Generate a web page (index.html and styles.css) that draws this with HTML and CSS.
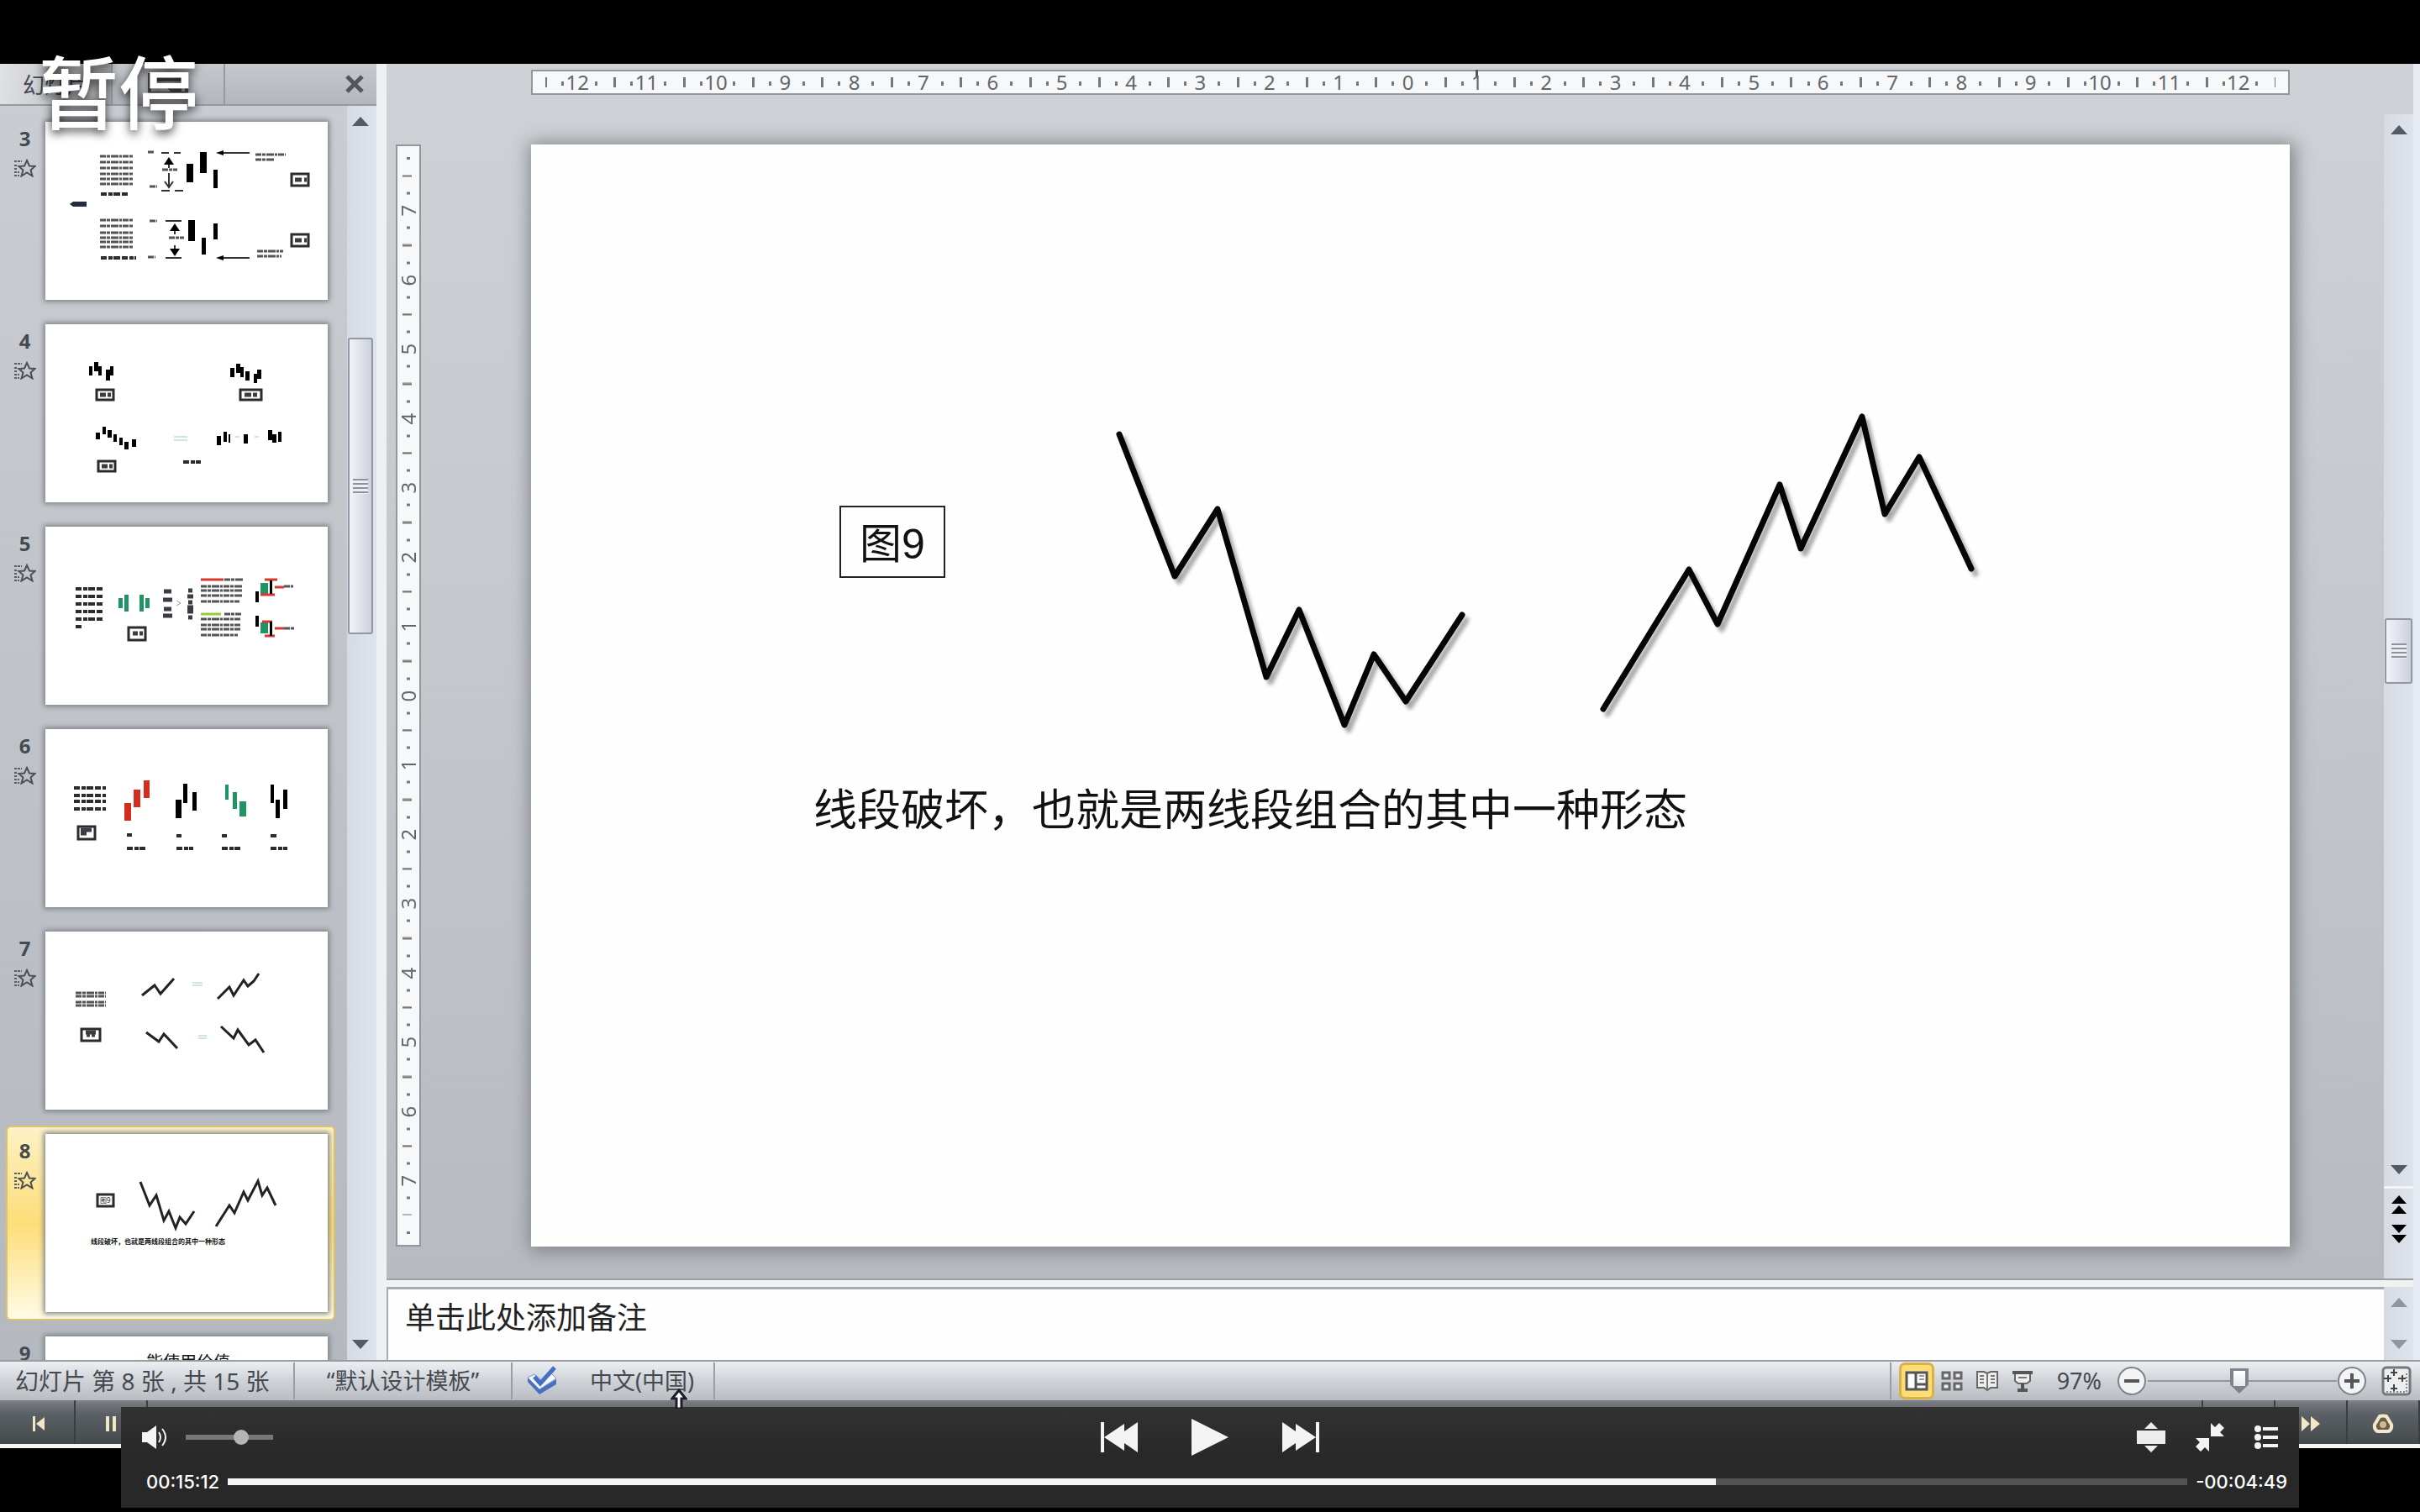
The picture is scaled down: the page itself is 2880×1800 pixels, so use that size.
FILE: index.html
```html
<!DOCTYPE html>
<html lang="zh-CN">
<head>
<meta charset="utf-8">
<title>视频播放</title>
<link rel="stylesheet" href="styles.css">
</head>
<body>
<main class="screen">
  <svg class="defs" aria-hidden="true">
    <symbol id="anim" viewBox="0 0 26 22">
      <path d="M15 2l3 6.500 6.500.500-5 4.500 2 7-6.500-4-6.500 4 2-7-5-4.500 6.500-.5z" fill="none" stroke="#4c5055" stroke-width="2"/>
      <path d="M0 3h9M0 8h4M0 12h3M0 16h6M0 20h6" stroke="#5b5f64" stroke-width="2" stroke-dasharray="3 1"/>
    </symbol>
  </svg>

  <section class="video">
    <div class="workspace">
      <aside class="outline">
        <header class="tabs">
          <button class="tab tab-on">幻灯片</button>
          <button class="tab" aria-label="大纲"><svg width="48" height="26" viewBox="0 0 48 26"><path d="M2 2h44v22H2zM8 8h32M8 14h14l6 6h12" fill="none" stroke="#4d5155" stroke-width="4"/></svg></button>
          <button class="close" aria-label="关闭"><svg width="24" height="24" viewBox="0 0 24 24"><path d="M3 3l18 18M21 3L3 21" stroke="#53575c" stroke-width="5"/></svg></button>
        </header>
        <div class="outline-body">
          <ol class="thumbs">
            <li class="item">
              <div class="meta"><b>3</b><svg width="26" height="22"><use href="#anim"/></svg></div>
              <button class="thumb" aria-label="幻灯片 3"><svg viewBox="0 0 336 212">
                <g class="scribble">
                  <path d="M65 41h39M65 48h39M65 55h39M65 62h39M65 68h39M65 74h39M65 117h39M65 124h39M65 132h39M65 138h39M65 143h39M65 149h39"/>
                  <path class="heavy" d="M66 86h32M66 162h42"/>
                  <path d="M250 39h36M250 45h22M252 154h31M252 160h29M122 36h8M124 77h9M124 118h9M122 161h9M139 57h18M147 138h18"/>
                </g>
                <path d="M29 98l4-3h16v6H33z" fill="#222c3a"/>
                <path class="rule" d="M138 37h9M153 37h8M138 82h10M154 82h10M143 118h19M143 162h19M208 37h35M208 162h35M147 50v5M147 61v16M142 71l5 7 5-7M154 128v6M154 147v8"/>
                <path d="M147 42l6 9h-12zM154 121l6 9h-12zM154 160l6-9h-12zM203 37l9-3v6zM203 162l9-3v6z"/>
                <path d="M168 50h8v22h-8zM184 36h8v25h-8zM200 57h5v22h-5zM170 117h8v25h-8zM186 138h5v20h-5zM200 121h5v19h-5z"/>
                <path class="box" d="M293 62h20v14h-20zM293 134h20v14h-20z"/>
                <path class="fill" d="M297 69h8M308 69h3M297 141h8M308 141h3"/>
              </svg></button>
            </li>
            <li class="item">
              <div class="meta"><b>4</b><svg width="26" height="22"><use href="#anim"/></svg></div>
              <button class="thumb" aria-label="幻灯片 4"><svg viewBox="0 0 336 212">
                <path d="M52 50h4v11h-4zM58 45h5v11h-5zM63 50h4v11h-4zM72 54h5v13h-5zM77 50h4v11h-4zM220 52h5v11h-5zM227 47h5v11h-5zM232 51h4v12h-4zM238 56h5v11h-5zM248 59h4v11h-4zM252 54h5v11h-5z"/>
                <path d="M60 129h5v8h-5zM68 122h4v9h-4zM74 126h5v9h-5zM81 131h4v9h-4zM88 135h4v9h-4zM94 140h5v9h-5zM103 137h5v9h-5zM204 133h5v11h-5zM212 128h4v12h-4zM218 131h2v10h-2zM236 131h5v11h-5zM265 126h5v12h-5zM270 131h5v10h-5zM277 128h4v12h-4z"/>
                <path class="box" d="M61 78h20v12h-20zM232 78h25v12h-25zM63 163h20v12h-20z"/>
                <path class="fill" d="M65 84h7M74 84h4M237 84h8M247 84h5M67 169h7M76 169h4"/>
                <path class="scribble heavy" d="M164 164h21"/>
                <path class="pale" d="M153 134h16M153 138h16M226 134h5M249 134h5"/>
              </svg></button>
            </li>
            <li class="item">
              <div class="meta"><b>5</b><svg width="26" height="22"><use href="#anim"/></svg></div>
              <button class="thumb" aria-label="幻灯片 5"><svg viewBox="0 0 336 212">
                <path class="scribble heavy" d="M36 74h34M36 83h34M36 92h34M36 101h34M36 110h34M36 119h7"/>
                <path class="fill" d="M141 77h9M140 87h11M141 98h9M140 106h11M170 76h5M169 83h7M170 90h5M169 96h7M169 101h7M170 108h5"/>
                <path d="M156 88l5 3-5 3" fill="none" stroke="#999"/>
                <path class="green" d="M87 85h5v12h-5zM94 81h5v20h-5zM112 81h5v20h-5zM119 85h5v12h-5zM256 67h9v14h-9zM256 114h9v13h-9z"/>
                <path class="box" d="M99 120h20v15h-20z"/>
                <path class="fill" d="M104 127h6M112 127h4"/>
                <path class="scribble" d="M213 63h22M185 71h50M185 76h50M185 82h50M185 89h46M213 104h20M185 110h47M185 117h47M185 122h47M185 129h44M284 71h11M284 121h13"/>
                <path d="M185 63h27M261 63h15M256 81h17M273 72h11M258 113h12M261 130h12M273 121h11" stroke="#d8382a" stroke-width="3"/>
                <path d="M185 104h24" stroke="#9acb3b" stroke-width="3"/>
                <path d="M250 77h4v13h-4zM267 64h3v16h-3zM250 106h4v13h-4zM267 113h3v17h-3z"/>
              </svg></button>
            </li>
            <li class="item">
              <div class="meta"><b>6</b><svg width="26" height="22"><use href="#anim"/></svg></div>
              <button class="thumb" aria-label="幻灯片 6"><svg viewBox="0 0 336 212">
                <path class="scribble heavy" d="M34 70h38M34 79h38M34 86h38M34 95h38M97 126h6M156 127h6M210 127h6M268 127h7M97 142h22M156 142h20M210 142h22M268 142h20"/>
                <path class="box" d="M39 116h20v15h-20z"/>
                <path class="fill" d="M42 120h13M42 124h7"/>
                <path class="red" d="M94 88h8v21h-8zM105 72h8v21h-8zM117 61h7v21h-7z"/>
                <path d="M155 84h7v22h-7zM164 65h5v23h-5zM175 75h5v22h-5zM268 66h4v22h-4zM274 84h5v22h-5zM283 72h5v23h-5z"/>
                <path class="green" d="M214 66h4v18h-4zM223 75h5v20h-5zM231 86h8v18h-8z"/>
              </svg></button>
            </li>
            <li class="item">
              <div class="meta"><b>7</b><svg width="26" height="22"><use href="#anim"/></svg></div>
              <button class="thumb" aria-label="幻灯片 7"><svg viewBox="0 0 336 212">
                <path class="scribble" d="M36 73h36M36 77h36M36 84h36M36 88h36"/>
                <path class="box" d="M43 116h22v14h-22z"/>
                <path class="fill" d="M48 120h12M49 123h4M55 123h4"/>
                <path class="zig" d="M115 76L130 64 137 74 153 56M205 80L219 66 224 76 236 58 241 65 248 59 254 50M120 120L135 131 141 122 157 139M209 113L224 127 229 117 242 135 250 129 260 144"/>
                <path class="pale" d="M175 61h12M175 64h12M182 124h10M182 127h10"/>
              </svg></button>
            </li>
            <li class="item item-on">
              <div class="meta"><b>8</b><svg width="26" height="22"><use href="#anim"/></svg></div>
              <button class="thumb" aria-label="幻灯片 8"><svg viewBox="0 0 336 212">
                <path class="box" d="M62 72h19v14h-19z"/>
                <text class="mini" x="65" y="82">图9</text>
                <path class="zig" d="M113 57L124 85 132 73 141 103 147 92 155 112 160 99 167 107 177 92M203 110L219 85 225 94 236 69 241 79 253 56 258 73 264 64 274 85"/>
                <text class="mini mini-bold" x="54" y="131">线段破坏，也就是两线段组合的其中一种形态</text>
              </svg></button>
            </li>
            <li class="item">
              <div class="meta"><b>9</b><svg width="26" height="22"><use href="#anim"/></svg></div>
              <button class="thumb" aria-label="幻灯片 9"><svg viewBox="0 0 336 212"><text class="mini-title" x="120" y="38">能使用价值</text></svg></button>
            </li>
          </ol>
          <div class="scroll scroll-outline">
            <button class="arrow" aria-label="向上"><svg width="20" height="11" viewBox="0 0 20 11"><path d="M0 11L10 0l10 11z"/></svg></button>
            <div class="track track-outline"><div class="grip"></div></div>
            <button class="arrow" aria-label="向下"><svg width="20" height="11" viewBox="0 0 20 11"><path d="M0 0h20L10 11z"/></svg></button>
          </div>
        </div>
      </aside>

      <div class="editor">
        <div class="stage-row">
          <div class="stage">
            <div class="ruler ruler-h">
              <span>12</span><span>11</span><span>10</span><span>9</span><span>8</span><span>7</span><span>6</span><span>5</span><span>4</span><span>3</span><span>2</span><span>1</span><span>0</span><span class="at">1</span><span>2</span><span>3</span><span>4</span><span>5</span><span>6</span><span>7</span><span>8</span><span>9</span><span>10</span><span>11</span><span>12</span>
            </div>
            <div class="ruler ruler-v">
              <span>7</span><span>6</span><span>5</span><span>4</span><span>3</span><span>2</span><span>1</span><span>0</span><span>1</span><span>2</span><span>3</span><span>4</span><span>5</span><span>6</span><span>7</span>
            </div>
            <article class="slide">
              <svg viewBox="0 0 2093 1312">
                <path d="M368 431h124v84H368z" fill="none" stroke="#222" stroke-width="2"/>
                <text class="figure" x="391" y="493">图9</text>
                <g class="lines">
                  <path d="M700 345L766 514 817 434 875 634 914 554 968 691 1003 607 1041 663 1108 560"/>
                  <path d="M1276 672L1378 506 1412 571 1486 405 1511 481 1584 324 1611 440 1652 372 1714 505"/>
                </g>
                <text class="caption" x="336" y="811">线段破坏，也就是两线段组合的其中一种形态</text>
              </svg>
            </article>
          </div>
          <div class="scroll scroll-main">
            <button class="arrow" aria-label="向上"><svg width="20" height="11" viewBox="0 0 20 11"><path d="M0 11L10 0l10 11z"/></svg></button>
            <div class="track track-main"><div class="grip"></div></div>
            <button class="arrow" aria-label="向下"><svg width="20" height="11" viewBox="0 0 20 11"><path d="M0 0h20L10 11z"/></svg></button>
            <div class="pager">
              <button class="arrow" aria-label="上一张"><svg width="18" height="22" viewBox="0 0 18 22"><path d="M9 0l9 10H0zM9 12l9 10H0z"/></svg></button>
              <button class="arrow" aria-label="下一张"><svg width="18" height="22" viewBox="0 0 18 22"><path d="M0 0h18L9 10zM0 12h18L9 22z"/></svg></button>
            </div>
          </div>
        </div>
        <div class="notes-row">
          <textarea class="notes" aria-label="备注">单击此处添加备注</textarea>
          <div class="scroll scroll-notes">
            <button class="arrow" aria-label="向上"><svg width="20" height="11" viewBox="0 0 20 11"><path d="M0 11L10 0l10 11z"/></svg></button>
            <button class="arrow" aria-label="向下"><svg width="20" height="11" viewBox="0 0 20 11"><path d="M0 0h20L10 11z"/></svg></button>
          </div>
        </div>
      </div>
    </div>

    <footer class="status">
      <span class="cell cell-count">幻灯片 第 8 张 , 共 15 张</span>
      <span class="cell cell-theme">“默认设计模板”</span>
      <span class="cell cell-lang"><svg width="40" height="38" viewBox="0 0 40 38"><path d="M2 20l14 15 20-12v-6L16 29 2 15z" fill="#4a6fc0"/><path d="M2 15l8-4 8 7 12-8 6 6-20 13z" fill="#f4f6fa" stroke="#7b93cf"/><path d="M10 14l7 8L34 3" fill="none" stroke="#4470c4" stroke-width="5"/></svg>中文(中国)</span>
      <div class="views">
        <button class="view view-on" aria-label="普通视图"><svg width="28" height="24" viewBox="0 0 28 24"><path d="M2 2h24v20H2z" fill="#fff" stroke="#555" stroke-width="3"/><path d="M13 2v20M14 16h11" stroke="#555" stroke-width="3"/><path d="M17 6h6M17 10h6" stroke="#999" stroke-width="2"/></svg></button>
        <button class="view" aria-label="幻灯片浏览"><svg width="28" height="24" viewBox="0 0 28 24"><path d="M3 2h8v7H3zM17 2h8v7h-8zM3 15h8v7H3zM17 15h8v7h-8z" fill="#eee" stroke="#666" stroke-width="3"/></svg></button>
        <button class="view" aria-label="阅读视图"><svg width="28" height="26" viewBox="0 0 28 26"><path d="M14 4L10 2H2v19h8l4 3 4-3h8V2h-8zv19" fill="#eee" stroke="#666" stroke-width="2"/><path d="M14 4v19M5 7h5M5 11h5M5 15h5M18 7h5M18 11h5M18 15h5" stroke="#777" stroke-width="2"/></svg></button>
        <button class="view" aria-label="幻灯片放映"><svg width="26" height="26" viewBox="0 0 26 26"><path d="M4 4h18v9l-4 3H8l-4-3z" fill="#eee" stroke="#666" stroke-width="2"/><path d="M1 3h24M13 16v7M7 24h12" stroke="#555" stroke-width="4"/><path d="M8 9h10" stroke="#777" stroke-width="2"/></svg></button>
      </div>
      <label class="zoom-label" for="zoom">97%</label>
      <button class="round" aria-label="缩小"><svg width="36" height="36" viewBox="0 0 36 36"><circle cx="18" cy="18" r="16" fill="#f3f4f6" stroke="#7e848b" stroke-width="2"/><path d="M9 18h18" stroke="#555" stroke-width="4"/></svg></button>
      <input class="zoom" id="zoom" type="range" min="10" max="180" value="92">
      <button class="round" aria-label="放大"><svg width="36" height="36" viewBox="0 0 36 36"><circle cx="18" cy="18" r="16" fill="#f3f4f6" stroke="#7e848b" stroke-width="2"/><path d="M9 18h18M18 9v18" stroke="#555" stroke-width="4"/></svg></button>
      <button class="round fit" aria-label="适应窗口"><svg width="36" height="36" viewBox="0 0 36 36"><rect x="2" y="2" width="32" height="32" rx="4" fill="#eceef0" stroke="#74787d" stroke-width="3"/><path d="M15 4v8M11 8h8M15 22v8M11 27h8M3 15h9M8 11v8M20 15h9M25 11v8" stroke="#444" stroke-width="2"/><path d="M6 31h24V7" fill="none" stroke="#888" stroke-width="2" stroke-dasharray="2 2"/></svg></button>
      <svg class="pointer" width="20" height="24" viewBox="0 0 20 24"><path d="M10 2l8 10h-5v12H7V12H2z" fill="#fff" stroke="#1c1c28" stroke-width="3"/></svg>
    </footer>

    <div class="recorder">
      <button class="rec" aria-label="开头"><svg width="16" height="18" viewBox="0 0 16 18"><path d="M1 0h3v18H1zM15 1v16L5 9z" fill="#f1e6c6"/></svg></button>
      <button class="rec" aria-label="暂停"><svg width="14" height="18" viewBox="0 0 14 18"><path d="M1 0h4v18H1zM9 0h4v18H9z" fill="#f1e6c6"/></svg></button>
      <span class="rec-gap"></span>
      <button class="rec" aria-label="后退"></button>
      <button class="rec" aria-label="快进"><svg width="24" height="18" viewBox="0 0 24 18"><path d="M1 0l10 9-10 9zM12 0l11 9-11 9z" fill="#f6e6c8"/></svg></button>
      <button class="rec" aria-label="录制"><svg width="26" height="24" viewBox="0 0 26 24"><path d="M9 3q4-1 8 0l6 10q1 5-3 8H6q-4-3-3-8z" fill="#6c5c40" stroke="#f3e7cf" stroke-width="4" stroke-linejoin="round"/><circle cx="13" cy="13" r="4" fill="#cdb994"/></svg></button>
    </div>
  </section>

  <div class="osd">暂停</div>

  <section class="player">
    <div class="controls">
      <div class="side">
        <button class="ctl" aria-label="静音"><svg width="32" height="30" viewBox="0 0 32 30"><path d="M0 9h6L17 1v28L6 21H0z" fill="#f4f4f4"/><path d="M20 9q4 6 0 12M24 5q8 10 0 20" fill="none" stroke="#f4f4f4" stroke-width="2"/></svg></button>
        <input class="volume" type="range" aria-label="音量" min="0" max="100" value="66">
      </div>
      <div class="middle">
        <button class="ctl" aria-label="上一个"><svg width="44" height="36" viewBox="0 0 44 36"><path d="M0 0h4v36H0zM4 18L28 2v9L44 0v36L28 25v9z" fill="#f4f4f4"/></svg></button>
        <button class="ctl" aria-label="播放"><svg width="44" height="44" viewBox="0 0 44 44"><path d="M0 0l44 22L0 44z" fill="#f4f4f4"/></svg></button>
        <button class="ctl" aria-label="下一个"><svg width="44" height="36" viewBox="0 0 44 36"><path d="M40 0h4v36h-4zM40 18L16 2v9L0 0v36l16-11v9z" fill="#f4f4f4"/></svg></button>
      </div>
      <div class="side side-end">
        <button class="ctl" aria-label="画面比例"><svg width="34" height="36" viewBox="0 0 34 36"><path d="M17 0l8 8H9zM0 10h34v16H0zM9 28h16l-8 8z" fill="#ececec"/></svg></button>
        <button class="ctl" aria-label="退出全屏"><svg width="34" height="34" viewBox="0 0 34 34"><path d="M18 0l5 5 5-5 6 6-5 5 5 5H18zM16 34l-5-5-5 5-6-6 5-5-5-5h16z" fill="#f4f4f4"/></svg></button>
        <button class="ctl" aria-label="播放列表"><svg width="28" height="28" viewBox="0 0 28 28"><path d="M10 2h18v4H10zM10 12h18v4H10zM10 22h18v4H10z" fill="#f4f4f4"/><circle cx="4" cy="4" r="4" fill="#f4f4f4"/><circle cx="4" cy="14" r="4" fill="#f4f4f4"/><circle cx="4" cy="24" r="4" fill="#f4f4f4"/></svg></button>
      </div>
    </div>
    <div class="timeline">
      <time class="time">00:15:12</time>
      <progress class="progress" aria-label="播放进度" max="1201" value="912"></progress>
      <time class="time">-00:04:49</time>
    </div>
  </section>
</main>
</body>
</html>
```

FILE: styles.css
```css
* { box-sizing: border-box; }

body {
  margin: 0;
  background: #000;
  color: #454a50;
  font-family: "Noto Sans", "Noto Sans CJK SC", sans-serif;
}

button {
  padding: 0;
  border: 0;
  background: none;
  color: inherit;
  font: inherit;
}

svg { display: block; }
.defs { position: absolute; width: 0; height: 0; }

.screen {
  position: relative;
  display: flex;
  min-height: 100vh;
  padding: 76px 0;
}

.video {
  display: flex;
  flex: 1;
  flex-direction: column;
  min-width: 0;
  border-bottom: 5px solid #f6f6f4;
  background: #c4c8cd;
}

.workspace {
  display: flex;
  flex: 1 1 0;
  min-height: 0;
  overflow: hidden;
}

/* Slide list */
.outline {
  display: flex;
  flex: 0 0 460px;
  flex-direction: column;
  border-right: 12px solid #eef1f4;
  background: linear-gradient(#cacdd2, #b5b9bf);
  box-shadow: inset -2px 0 #9da2a9;
}

.tabs {
  display: flex;
  flex: none;
  align-items: stretch;
  height: 50px;
  border-bottom: 2px solid #969ba3;
  background: linear-gradient(#c5c8cd, #b3b7bd);
}

.tab {
  display: flex;
  align-items: center;
  justify-content: center;
  width: 134px;
  border-right: 2px solid #979ba1;
  font-size: 26px;
}

.tab-on { background: linear-gradient(100deg, #e0e2e5, #b0b3b7); }
.close { margin-left: auto; padding: 0 14px; }

.outline-body {
  display: flex;
  flex: 1;
  min-height: 0;
}

.thumbs {
  display: flex;
  flex: 1;
  flex-direction: column;
  gap: 9px;
  margin: 0;
  padding: 9px 14px 0 7px;
  overflow: hidden;
  list-style: none;
}

.item {
  display: flex;
  flex: none;
  padding: 8px 7px 8px 0;
  border: 2px solid transparent;
  border-radius: 6px;
}

.item-on {
  border-color: #dcc36a;
  background: linear-gradient(#fdf2c6, #fddd78 50%, #fffbe6);
}

.meta {
  display: flex;
  flex: 0 0 45px;
  flex-direction: column;
  align-items: center;
  gap: 8px;
  padding: 4px 4px 0 0;
  font-size: 24px;
  line-height: 32px;
}

.thumb {
  flex: 1;
  background: #fff;
  box-shadow: 0 0 6px 2px #7c8086;
}

.thumb svg { width: 100%; }
.scribble { fill: none; stroke: #555; stroke-width: 3; stroke-dasharray: 7 1 4 1 9 1 3 1; }
.heavy { stroke: #2c2c2c; stroke-width: 4; stroke-dasharray: 7 2 5 1 8 2; }
.fill { fill: none; stroke: #3a3d44; stroke-width: 5; }
.rule { fill: none; stroke: #333; stroke-width: 2; }
.box { fill: #fff; stroke: #2b2b2b; stroke-width: 3; }
.zig { fill: none; stroke: #222; stroke-width: 3; }
.pale { stroke: #cfe5dd; stroke-width: 2; }
.green { fill: #219464; }
.red { fill: #d32d1e; }
.mini { fill: #111; font-size: 8px; }
.mini-bold { font-weight: 700; }
.mini-title { fill: #111; font-size: 20px; }

/* Scroll bars */
.scroll {
  display: flex;
  flex: 0 0 35px;
  flex-direction: column;
  align-items: center;
  padding: 13px 0;
  background: linear-gradient(90deg, #d6dae3, #dfe3eb);
}

.arrow { fill: #555a63; }

.track {
  display: flex;
  flex: 1;
  align-self: stretch;
  flex-direction: column;
}

.grip {
  display: grid;
  place-items: center;
  margin: 0 1px;
  border: 2px solid #9297a6;
  border-radius: 3px;
  background: linear-gradient(90deg, #f1f3f8, #cdd1dc);
}

.grip::before {
  width: 18px;
  height: 18px;
  background: repeating-linear-gradient(#8d929b 0 2px, #eceef3 2px 5px);
  content: "";
}

.scroll-outline { padding-right: 3px; }
.track-outline { padding-top: 252px; }
.track-outline .grip { height: 353px; }
.track-main { padding-top: 576px; }
.track-main .grip { height: 78px; }
.scroll-main { margin-top: 60px; padding-bottom: 0; }

.pager {
  display: flex;
  flex-direction: column;
  align-items: center;
  align-self: stretch;
  gap: 13px;
  height: 110px;
  margin-top: 14px;
  padding-top: 8px;
  border-top: 3px solid #f3f4f6;
}

.pager .arrow { fill: #000; }
.scroll-notes { justify-content: space-between; }
.scroll-notes .arrow { fill: #90959e; }

/* Editing area */
.editor {
  display: flex;
  flex: 1;
  flex-direction: column;
  min-width: 0;
  padding-right: 8px;
  background: #e6eaf3;
}

.stage-row {
  display: flex;
  flex: 1;
  min-height: 0;
  background: linear-gradient(#ced2d6, #c4c8cd 50%, #b7bbc1);
}

.stage {
  display: grid;
  flex: 1;
  grid-template: 30px 1fr / 30px 1fr;
  gap: 59px 131px;
  min-width: 0;
  padding: 7px 112px 38px 11px;
}

.ruler {
  display: flex;
  border: 2px solid #92979c;
  background: #f7f8f9;
  font-size: 24px;
  line-height: 26px;
  text-align: center;
}

.ruler span { flex: 1 1 0; color: #63666a; }
.ruler-h { grid-column: 2; padding: 0 15px; }

.ruler-h span {
  position: relative;
  padding-right: 6px;
  background:
    linear-gradient(#777, #777) 0 50% / 2px 12px no-repeat,
    linear-gradient(#777, #777) 100% 50% / 1px 12px no-repeat,
    linear-gradient(#777, #777) 24% 55% / 3px 5px no-repeat,
    linear-gradient(#777, #777) 74% 55% / 3px 5px no-repeat;
}

.at::before {
  position: absolute;
  top: -2px;
  left: 36px;
  width: 3px;
  height: 8px;
  background: #555;
  content: "";
}

.ruler-v {
  flex-direction: column;
  padding: 35px 0;
  background:
    linear-gradient(#777, #777) 50% 13px / 4px 3px no-repeat,
    linear-gradient(#777, #777) 50% calc(100% - 13px) / 4px 3px no-repeat,
    #f7f8f9;
}

.ruler-v span {
  writing-mode: vertical-rl;
  transform: rotate(180deg);
  background:
    linear-gradient(#777, #777) 60% 0 / 11px 1px no-repeat,
    linear-gradient(#777, #777) 60% 100% / 11px 2px no-repeat,
    linear-gradient(#777, #777) 50% 24% / 4px 3px no-repeat,
    linear-gradient(#777, #777) 50% 76% / 4px 3px no-repeat;
}

.slide {
  min-width: 0;
  min-height: 0;
  background: #fefefe;
  box-shadow: 2px 2px 20px 4px #80858a;
}

.slide svg { width: 100%; height: 100%; }

.lines {
  fill: none;
  stroke: #050505;
  stroke-linecap: round;
  stroke-linejoin: round;
  stroke-width: 7;
  filter: drop-shadow(5px 6px 2px #0005);
}

.figure,
.caption {
  fill: #111;
  font-family: "Liberation Sans", "Noto Sans CJK SC", sans-serif;
  font-size: 52px;
}

.figure { font-size: 50px; }

.notes-row {
  display: flex;
  flex: none;
  height: 97px;
  border-top: 2px solid #9b9fa4;
  background: #eff1f3;
  padding-top: 8px;
}

.notes {
  flex: 1;
  padding: 4px 20px;
  border: 0;
  border-top: 3px solid #a8abaf;
  border-left: 2px solid #a8abaf;
  background: #fefefe;
  color: #222;
  font-family: "Noto Sans CJK SC", sans-serif;
  font-size: 36px;
  line-height: 54px;
  resize: none;
}

/* Status bar */
.status {
  position: relative;
  display: flex;
  flex: none;
  align-items: center;
  height: 48px;
  padding-right: 10px;
  border-top: 2px solid #999da2;
  background: linear-gradient(#eceff2, #cfd3d8 50%, #b9bdc2);
  font-size: 27px;
  line-height: 44px;
}

.cell {
  display: flex;
  align-items: center;
  border-right: 2px solid #9a9ea4;
  white-space: nowrap;
}

.cell-count { width: 351px; padding-left: 18px; font-size: 28px; }
.cell-theme { width: 259px; justify-content: center; }
.cell-lang { gap: 36px; width: 241px; padding-left: 16px; }

.views {
  display: flex;
  align-items: center;
  margin-left: auto;
  padding-left: 9px;
  border-left: 2px solid #9a9ea4;
}

.view {
  display: grid;
  place-items: center;
  width: 42px;
  height: 44px;
}

.view-on {
  border: 3px solid #d9b04a;
  border-radius: 7px;
  background: #fbdc75;
}

.zoom-label { margin: 0 18px 0 20px; }
.round { flex: none; }
.fit { margin-left: 17px; }

.zoom {
  width: 225px;
  height: 36px;
  margin: 0 0 0 1px;
  background: linear-gradient(#9297a0, #9297a0) center / 100% 2px no-repeat;
  appearance: none;
}

.zoom::-webkit-slider-thumb {
  width: 22px;
  height: 30px;
  background: linear-gradient(#fff, #e6e8eb) center 3px / 14px 18px no-repeat, #7e848d;
  clip-path: polygon(0 0, 100% 0, 100% 65%, 50% 100%, 0 65%);
  appearance: none;
}

.pointer { position: absolute; top: 32px; left: 798px; z-index: 1; }

.recorder {
  display: flex;
  flex: none;
  height: 52px;
  padding-left: 4px;
  background: linear-gradient(#7c8084, #5c6165 30%, #44494c);
}

.rec {
  display: grid;
  place-items: center;
  width: 86px;
  padding-top: 4px;
  border-right: 2px solid #3b3f43;
}

.rec-gap { flex: 1; border-right: 2px solid #3b3f43; }

/* Overlays */
.osd {
  position: absolute;
  top: 58px;
  left: 46px;
  color: #fff;
  font-family: "Noto Sans CJK SC", sans-serif;
  font-size: 95px;
  font-weight: 500;
  line-height: 96px;
  text-shadow: 0 4px 12px #000c;
}

.player {
  position: absolute;
  right: 5%;
  bottom: 5px;
  left: 5%;
  height: 120px;
  background: linear-gradient(#323232, #282828 50%);
  color: #fff;
  font-family: Inter, sans-serif;
}

.controls {
  display: flex;
  align-items: center;
  height: 72px;
  padding: 0 25px;
}

.side,
.middle {
  display: flex;
  flex: 1;
  align-items: center;
}

.side { gap: 20px; }
.side-end { justify-content: flex-end; gap: 36px; }
.middle { flex: none; gap: 64px; }

.volume {
  width: 104px;
  height: 18px;
  margin: 0;
  background: linear-gradient(#777, #777) center / 100% 6px no-repeat;
  appearance: none;
}

.volume::-webkit-slider-thumb {
  width: 18px;
  height: 18px;
  border-radius: 50%;
  background: #b5b5b5;
  appearance: none;
}

.timeline {
  display: flex;
  align-items: center;
  gap: 10px;
  padding: 0 14px 0 30px;
}

.time {
  font-size: 22px;
  font-weight: 500;
  line-height: 34px;
}

.progress {
  flex: 1;
  min-width: 0;
  height: 8px;
  border: 0;
  background: #525252;
  appearance: none;
}

.progress::-webkit-progress-bar { background: #525252; }
.progress::-webkit-progress-value { background: #f5f5f5; }
```
